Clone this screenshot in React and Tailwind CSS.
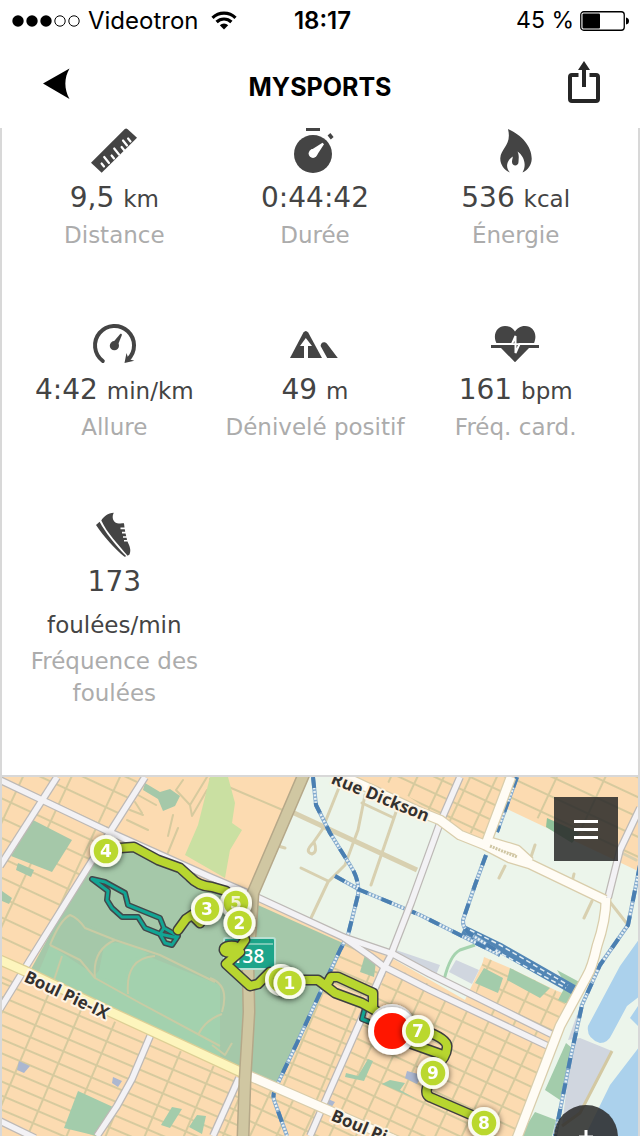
import React from "react";

const ICON = "block h-[46px] w-12 overflow-visible";

function RulerIcon() {
  const ticks = [
    [14, 38.5, 3],
    [19, 35, 6],
    [24, 30.5, 3],
    [29, 26.5, 6],
    [34, 22, 3],
    [37, 17.5, 5],
    [40.5, 13.5, 3],
  ];
  return (
    <svg viewBox="0 0 48 46" className={ICON} aria-hidden="true">
      <path d="M1 34.7 34.8 1Q36.2 0 37.4 1L47 9.7 11.7 44.8Z" fill="#444" />
      <g stroke="#fff" strokeWidth="2.2" strokeLinecap="round">
        {ticks.map(([x, y, n]) => (
          <line key={x} x1={x} y1={y} x2={x - n * 0.8} y2={y - n} />
        ))}
      </g>
    </svg>
  );
}

function StopwatchIcon() {
  return (
    <svg viewBox="0 0 48 46" className={ICON} aria-hidden="true">
      <rect x="15" y="0" width="14" height="3" fill="#444" />
      <circle cx="22" cy="26" r="19" fill="#444" />
      <path d="M36.6 7.6 39.4 5 42.6 9 39.8 11.6Z" fill="#444" />
      <path d="M20 22 31.5 14.8 33 16.3 26 27Z" fill="#fff" />
      <circle cx="22" cy="25.5" r="4.4" fill="#fff" />
    </svg>
  );
}

function FlameIcon() {
  return (
    <svg viewBox="0 0 48 46" className={ICON} aria-hidden="true">
      <path
        fill="#444"
        d="M16 1C30 7 40 19 39.7 31C39.5 37 36 42 30.500 44.5C35 37 32 28 25.5 23.500C27.5 28 26.5 31 26.5 34C26.5 38.5 20 38.5 20 34C20 32 20.5 31 20.8 28.5C14 33 13.5 40 18 44.5C12 42 8 36 8.3 30C9 20 20 17 16 1Z"
      />
    </svg>
  );
}

function GaugeIcon() {
  return (
    <svg viewBox="0 0 48 46" className={ICON} aria-hidden="true">
      <path d="M12.8 41A19.5 19.5 0 1 1 38 39.5" fill="none" stroke="#444" strokeWidth="4" strokeLinecap="round" />
      <path d="M36.5 33 38.5 39 44.3 40.7 34.5 43Z" fill="#444" />
      <circle cx="24.4" cy="25.7" r="4.6" fill="#444" />
      <path d="M22.5 23 30.4 13.8Q32 13.4 31.9 15L27.5 26Z" fill="#444" />
    </svg>
  );
}

function MountainIcon() {
  return (
    <svg viewBox="0 0 48 46" className={ICON} aria-hidden="true">
      <path d="M-1 38 12.4 12.6Q14.8 9.4 17.2 12.6L31 38Z" fill="#444" />
      <path d="M14.8 18 21 26H17V38H13V26H9Z" fill="#fff" />
      <path d="M29.6 26Q30 21.6 33.8 22.2 35.4 22.4 36.6 24.4L46.8 38H36.2Z" fill="#444" />
    </svg>
  );
}

function HeartIcon() {
  return (
    <svg viewBox="0 0 48 46" className={ICON} aria-hidden="true">
      <path
        fill="#444"
        d="M4.5 23.2C0 14 5.500 6 13 6C18 6 21 8.500 23 11.500C25 8.500 28 6 33 6C41 6 46 14 42 23.200ZM9 28H37L23 42.200Z"
      />
      <rect x="-1" y="25" width="48" height="3" fill="#444" />
      <path d="M2.500 24H20L23.500 16V33L27.500 24H44" fill="none" stroke="#fff" strokeWidth="2" />
    </svg>
  );
}

function ShoeIcon() {
  return (
    <svg viewBox="0 0 48 46" className={ICON} aria-hidden="true">
      <path
        fill="#444"
        d="M11.300 8.500C13.500 4.500 18 1.300 23.800 0.800C22.500 3 22 7 24.500 9.700C27 12 31 11.400 34 11.300L34.500 15.600H30.500V17.200H34.800L35.200 19.800H32V21.400H35.600L36.200 24.200H33V25.800H36.600L37 28H34V29.600H37.500C39.500 34 41.500 38 39.500 42.500L37.600 43.800C28 32 17 21 11.300 8.500Z"
      />
      <path d="M6 13 9.600 9.800C15 20 25 33 36.300 44.300L34.500 44.800C25 37 14 25 6 13Z" fill="#444" />
    </svg>
  );
}

const STATS = [
  { Icon: RulerIcon, value: "9,5", unit: "km", label: "Distance" },
  { Icon: StopwatchIcon, value: "0:44:42", unit: "", label: "Durée" },
  { Icon: FlameIcon, value: "536", unit: "kcal", label: "Énergie" },
  { Icon: GaugeIcon, value: "4:42", unit: "min/km", label: "Allure" },
  { Icon: MountainIcon, value: "49", unit: "m", label: "Dénivelé positif" },
  { Icon: HeartIcon, value: "161", unit: "bpm", label: "Fréq. card." },
  { Icon: ShoeIcon, value: "173", unit: "foulées/min", label: "Fréquence des foulées" },
];

function Stat({ Icon, value, unit, label }) {
  return (
    <li className="flex flex-col items-center px-2 text-center">
      <Icon />
      <p className="mt-[3px] text-[28px] leading-[42px] text-[#444]">
        {value} {unit && <span className="text-[23px] leading-none">{unit}</span>}
      </p>
      <p className="text-[23px] leading-8 text-[#acacac]">{label}</p>
    </li>
  );
}

function StatusBar() {
  return (
    <div className="grid h-[41px] grid-cols-3 items-center pl-3 pr-[11px] text-2xl text-black">
      <div className="flex items-center gap-2">
        <svg viewBox="0 0 68 12" className="h-3 w-[68px] shrink-0" aria-hidden="true">
          {[6, 20, 34].map((x) => (
            <circle key={x} cx={x} cy="6" r="5.7" />
          ))}
          {[48, 62].map((x) => (
            <circle key={x} cx={x} cy="6" r="5.200" fill="none" stroke="#000" />
          ))}
        </svg>
        <span>Videotron</span>
        <svg viewBox="0 0 26 19" className="ml-1 h-[19px] w-[26px] shrink-0" aria-hidden="true">
          <g fill="none" stroke="#000" strokeWidth="3.200">
            <path d="M1.500 6.800A16.500 16.500 0 0 1 24.500 6.800" />
            <path d="M5.600 11A10.600 10.600 0 0 1 20.400 11" />
          </g>
          <path d="M8.800 14.200A6 6 0 0 1 17.200 14.200L13 18.500Z" />
        </svg>
      </div>
      <span className="pl-1 text-center font-semibold">18:17</span>
      <div className="flex items-center justify-end gap-[6px]">
        <span className="whitespace-nowrap text-[23px]">45 %</span>
        <svg viewBox="0 0 49 20" className="h-5 w-[49px] shrink-0" aria-hidden="true">
          <rect x="0.750" y="0.750" width="43.500" height="18.500" rx="3" fill="none" stroke="#000" strokeWidth="1.300" />
          <rect x="2.500" y="2.500" width="17.500" height="15" rx="1" />
          <path d="M46 6.500Q49 7 49 10T46 13.500Z" />
        </svg>
      </div>
    </div>
  );
}

function NavBar() {
  return (
    <div className="flex h-[87px] items-center justify-between px-10 pt-[6px]">
      <button type="button" aria-label="Retour" className="-mt-2 flex h-12 w-8 items-center">
        <svg viewBox="0 0 32 32" className="h-8 w-8">
          <path d="M3 15.500 29.500 0.500C24 10 24 21 29.500 31Z" />
        </svg>
      </button>
      <h1 className="text-[25px] font-bold text-black">MYSPORTS</h1>
      <button type="button" aria-label="Partager" className="-mt-3 flex h-12 w-8 items-center">
        <svg viewBox="0 0 32 42" className="h-[42px] w-8">
          <path d="M10.500 14H4Q2 14 2 16V38Q2 40 4 40H28Q30 40 30 38V16Q30 14 28 14H21.500" fill="none" stroke="#262626" strokeWidth="4" />
          <path d="M16 0 22 9H18V26H14V9H10Z" fill="#262626" />
        </svg>
      </button>
    </div>
  );
}

const GREY_ROADS = [
  "M0 780 42 800 105 830 210 877 250 894 343 937 370 956 383 966 430 990 552 1048",
  "M343 937 393 954 430 974 557 1037",
  "M57 777 0 866",
  "M145 777 110 832 30 960 0 1009",
  "M151 1034 132 1079 117 1106 97 1136",
  "M0 1121 35 1138",
  "M460 777 440 823 411 903 390 957 383 970 323 1106 310 1136",
  "M640 808 620 850 608 898",
  "M239 1078 213 1136",
];

const CREAM_ROADS = [
  "M330 770 420 812 440 820 460 835 485 845 510 858 530 864 605 900",
  "M511 777 487 841 517 850 530 862",
  "M606 898Q606 920 597 946 592 968 587 976L560 1026 517 1138",
  "M245 1074 330 1111 400 1142",
];

const RAILS = [
  "M313 777 316 805 330 833 350 865Q360 880 358 895L348 935 340 950 320 993 297 1043 278 1083Q272 1092 274 1100L287 1136",
  "M335 876 360 890 420 915 460 935 500 955",
  "M486 855 475 885 463 920Q462 930 475 937L500 953",
  "M640 865 628 925 600 965 582 1005 570 1060 555 1136",
  "M517 777 497 832",
];

const TAN_STREETS = [
  "M340 785 322 830 313 843Q304 852 312 854 318 852 314 842",
  "M365 795 358 830 345 865 328 882 311 918",
  "M362 803 394 818M396 812 371 885M301 868 328 881M278 846 285 848",
  "M535 845 530 860M505 866 499 878M592 901 584 918M574 874 572 882",
  "M628 925 606 897M636 860 622 853",
];

const PARK_PATHS = [
  "M50 945Q60 920 70 915 78 918 85 928L115 940 160 955 215 982",
  "M50 945 80 960 95 978 140 1003 220 1046",
  "M62 956 54 980M95 978Q92 950 115 940M128 994Q125 958 155 956M198 1035Q205 1020 222 1014",
  "M210 978Q230 985 222 1012M212 1045 225 1055 232 1043",
];

const ROUTE = [
  "M106 850 120 848 134 847 158 860 180 868 190 877Q198 886 212 887L226 891 238 905 240 925 245 940 238 950Q226 955 224 950 224 945 235 946L240 952 226 964 250 986 258 984 270 972 290 980 318 980 326 986 335 993 362 1003 385 1016 418 1032",
  "M326 986 331 977H338L373 993V1008",
  "M207 909 200 923 192 915 186 919 178 930",
  "M428 1032Q449 1040 447 1048 446 1058 436 1066L433 1075 427 1088Q425 1096 432 1098L483 1120",
  "M412 1044 443 1055",
];

const TEAL_ROUTE = [
  "M92 879 105 882 125 893 128 905 160 918 164 928 178 936 172 945 165 943 160 934 145 928 138 917H122L112 908 107 900 108 891Z",
  "M164 928 160 934 178 938",
  "M365 1008 362 1019 372 1023",
];

const MARKERS = [
  { n: "4", x: 106, y: 851 },
  { n: "5", x: 236, y: 903, behind: true },
  { n: "3", x: 207, y: 909 },
  { n: "2", x: 239.500, y: 923 },
  { n: "", x: 281, y: 980 },
  { n: "1", x: 289.500, y: 983 },
];

const LATE_MARKERS = [
  { n: "7", x: 418, y: 1031 },
  { n: "9", x: 433, y: 1073 },
  { n: "8", x: 484, y: 1123 },
];

function Strokes({ paths, color, width, ...rest }) {
  return (
    <g fill="none" stroke={color} strokeWidth={width} strokeLinejoin="round" {...rest}>
      {paths.map((d) => (
        <path key={d} d={d} />
      ))}
    </g>
  );
}

function Marker({ n, x, y, behind }) {
  return (
    <g filter="url(#shadow)">
      <circle cx={x} cy={y} r="16" fill="#fafbef" />
      <circle cx={x} cy={y} r="12.300" fill="#bad82e" />
      <text
        x={x}
        y={y + 6}
        textAnchor="middle"
        fontSize="17"
        fill={behind ? "#f2f4d6" : "#fff"}
        className="font-['DejaVu_Sans',sans-serif] font-bold"
      >
        {n}
      </text>
    </g>
  );
}

function RouteMap() {
  return (
    <svg
      viewBox="2 777 636 359"
      preserveAspectRatio="xMinYMin slice"
      className="absolute inset-0 h-full w-full"
      role="img"
      aria-label="Carte du parcours"
    >
      <defs>
        <pattern id="streetsWide" width="44" height="18" patternUnits="userSpaceOnUse" patternTransform="translate(18 785) rotate(25)">
          <path d="M0 1H44M1 0V18" stroke="#d6ca9e" strokeWidth="2" />
        </pattern>
        <pattern id="streets" width="36" height="13" patternUnits="userSpaceOnUse" patternTransform="translate(45 1000) rotate(23)">
          <path d="M0 1H36M1 0V13" stroke="#d6ca9e" strokeWidth="2" />
        </pattern>
        <pattern id="streetsEast" width="24" height="15" patternUnits="userSpaceOnUse" patternTransform="translate(440 1010) rotate(25)">
          <path d="M0 1H24M1 0V15" stroke="#d6ca9e" strokeWidth="2" />
        </pattern>
        <filter id="shadow" x="-40%" y="-40%" width="180%" height="180%">
          <feDropShadow dx="0" dy="1" stdDeviation="3" floodColor="#000" floodOpacity="0.650" />
        </filter>
      </defs>

      <rect x="0" y="770" width="640" height="370" fill="#fcdbb1" />
      <path d="M0 777H140L105 835 50 930 0 1005Z" fill="url(#streetsWide)" />
      <path d="M0 970 245 1080V1136H0Z" fill="url(#streets)" />
      <path d="M343 940 390 965 325 1110 245 1075 280 1080Z" fill="url(#streets)" />
      <path d="M390 965 552 1045 515 1136H245V1080L325 1110Z" fill="url(#streetsEast)" />
      <path d="M380 777H508L485 840 440 818Z" fill="url(#streetsEast)" />
      <path d="M517 777H640V860L505 805Z" fill="url(#streetsWide)" />

      <Strokes
        color="#d6ca9e"
        width="2"
        strokeLinecap="round"
        paths={[
          "M138 795 156 805M135 802 142 813M130 810 143 815M127 820 148 830M173 815 168 836M178 828 167 855M183 780 176 790 190 805 207 777M190 805 192 816 207 790M210 779 285 811",
        ]}
      />

      <path d="M33 820 72 840 52 872 11 856Z" fill="#a5c8a9" />
      <path d="M18 863 34 870 31 877 16 870ZM2 891 12 898 9 904 2 901Z" fill="#a5c8a9" />
      <path d="M145 783 160 792 170 789 180 796 175 806 163 811 158 799 143 790Z" fill="#a5c8a9" />
      <path d="M210 777H228L235 803 232 823 242 830 230 850 225 878 185 855 198 825Z" fill="#cae0a2" />
      <path d="M104 836 345 944 279 1085 30 971Z" fill="#a5c8a9" />
      <path d="M50 945 95 955 120 945 220 985V1062L140 1028 36 978Z" fill="#a3d1ae" />
      <path d="M50 945 68 916 125 942 95 975Z" fill="#a5c8a9" />
      <path d="M104 946Q116 936 150 954L128 960 124 985 98 976Z" fill="#a3d1ae" />

      <path d="M304 777H345L420 812 485 845 505 808 640 872V1136H515L570 1010 540 990 484 960 465 1000 395 960 252 896Z" fill="#ecf5eb" />
      <path d="M484 957 510 968 555 990 580 1000 550 1048 472 1010Z" fill="#fcdbb1" />
      <path d="M484 957 510 968 555 990 570 1010 550 1048 472 1010Z" fill="url(#streetsEast)" />
      <path d="M510 968 550 988 540 998 507 980ZM484 968 503 978 498 993 475 983Z" fill="#a3ccab" />
      <path d="M557 970 585 985 570 1005 558 1000 566 985Z" fill="#a3ccab" />
      <path d="M456 960 479 970 472 984 449 972Z" fill="#d0d6df" />
      <path d="M444 980Q450 955 460 950L475 945" fill="none" stroke="#a5d3ae" strokeWidth="3" />
      <path d="M396 950 440 965 436 975 396 960Z" fill="#d0d6df" />
      <path d="M365 955 376 962 374 977 360 972Z" fill="#a5c8a9" />
      <path d="M547 818 580 833 572 843 546 827Z" fill="#8fc29a" />

      <path d="M640 938 620 966 588 1026Q586 1038 600 1043 608 1043 612 1034L627 1006 640 996Z" fill="#abd1ec" />
      <path d="M640 1003 630 1018 640 1028ZM640 1046 610 1085 585 1136H640Z" fill="#abd1ec" />
      <path d="M578 1012 568 1040 580 1038 612 1051 580 1113 562 1126 570 1060Z" fill="#d0d6df" />
      <path d="M566 1043 572 1048 560 1100 545 1090Z" fill="#a3ccab" />
      <path d="M535 1112 556 1120 552 1136H520Z" fill="#a3ccab" />
      <path d="M612 1051 580 1113 562 1126" fill="none" stroke="#d3c8a2" strokeWidth="3" />

      <path d="M78 1091 113 1107 97 1136 64 1128Z" fill="#a3ccab" />
      <path d="M172 1107 182 1109 170 1128 161 1125ZM197 1115 206 1116 202 1134 189 1127Z" fill="#a3ccab" />
      <path d="M368 1059 373 1061 364 1081 345 1077 346 1073 358 1076ZM390 1080 405 1083 400 1090 416 1099 382 1084Z" fill="#a3ccab" />
      <path d="M19 1061 30 1066 24 1073 17 1070ZM113 1077 122 1081 118 1087 112 1083ZM407 1071 422 1075 417 1084 405 1078ZM328 1099 335 1102 331 1108 325 1104Z" fill="#abb7d0" />

      <Strokes paths={PARK_PATHS} color="#c9cba4" width="2" />
      <Strokes paths={TAN_STREETS} color="#d8d0b0" width="3" strokeLinecap="round" />
      <path d="M292 812 417 870" stroke="#d8d0b0" strokeWidth="5" />

      <path d="M463 930 500 948 574 990" fill="none" stroke="#5286b5" strokeWidth="10" />
      <path d="M470 930 500 945 568 985M466 936 498 952 566 988" fill="none" stroke="#e1ecf2" strokeWidth="1.500" strokeDasharray="5 3" />
      <Strokes paths={RAILS} color="#83aace" width="4" />
      <Strokes paths={RAILS} color="#eaf2f4" width="2.500" strokeDasharray="2 1.500" />
      <Strokes paths={RAILS} color="#4a7fb1" width="4" strokeDasharray="11 15" />

      <Strokes paths={GREY_ROADS} color="#bdb9b6" width="8" />
      <Strokes paths={GREY_ROADS} color="#f3f2f5" width="5.500" />
      <Strokes paths={CREAM_ROADS} color="#d9cdab" width="11" />
      <Strokes paths={CREAM_ROADS} color="#fffcf5" width="8.500" />
      <path d="M490 846 517 857" stroke="#cfc6a3" strokeWidth="3" strokeDasharray="2 1" />
      <path d="M0 960 25 971 100 1007 245 1074" fill="none" stroke="#ddcf95" strokeWidth="11" />
      <path d="M0 960 25 971 100 1007 245 1074" fill="none" stroke="#fdf5bd" strokeWidth="8.500" />
      <path d="M304 774 253 893 248 966 249 1012 245 1080 243 1138" fill="none" stroke="#b5a889" strokeWidth="13" />
      <path d="M304 774 253 893 248 966 249 1012 245 1080 243 1138" fill="none" stroke="#d0c7a2" strokeWidth="10" />

      <g
        fill="#34312f"
        stroke="#fdf4e4"
        strokeWidth="4"
        paintOrder="stroke"
        strokeLinejoin="round"
        fontSize="17"
        className="font-['Open_Sans',sans-serif] font-bold"
      >
        <text transform="translate(330 783) rotate(22)">Rue Dickson</text>
        <text transform="translate(23 981) rotate(25)">Boul Pie-IX</text>
        <text transform="translate(330 1120) rotate(23)">Boul Pie-IX</text>
      </g>

      <rect x="224" y="938" width="51" height="31" rx="2" fill="#1da58a" stroke="#b8e0d2" strokeWidth="2" />
      <path d="M226 944H273" stroke="#d0ebe0" />
      <text x="248" y="963" textAnchor="middle" fontSize="19" fill="#fff" className="font-['Open_Sans',sans-serif] font-semibold">
        138
      </text>

      <Strokes paths={TEAL_ROUTE} color="#43474a" width="6" />
      <Strokes paths={TEAL_ROUTE} color="#12a594" width="3" />
      <Strokes paths={ROUTE} color="#3f4040" width="11" strokeLinecap="round" />
      <Strokes paths={ROUTE} color="#b8d62f" width="8" strokeLinecap="round" />

      {MARKERS.map((m) => (
        <Marker key={m.x} {...m} />
      ))}
      <g filter="url(#shadow)">
        <circle cx="392" cy="1027" r="23" fill="#f2f2f2" />
      </g>
      <g filter="url(#shadow)">
        <circle cx="392" cy="1031" r="24" fill="#fff" />
        <circle cx="392" cy="1031" r="18" fill="#ff1600" />
      </g>
      {LATE_MARKERS.map((m) => (
        <Marker key={m.x} {...m} />
      ))}
    </svg>
  );
}

export default function App() {
  return (
    <div className="flex h-screen flex-col overflow-hidden bg-white font-['Inter',sans-serif]">
      <header className="shrink-0 bg-white">
        <StatusBar />
        <NavBar />
      </header>
      <main className="flex flex-1 flex-col border-x-2 border-[#d8d8d8]">
        <ul className="grid grid-cols-3 gap-y-[69px] pb-[66px] pl-3 pr-[22px] font-['DejaVu_Sans',sans-serif]">
          {STATS.map((s) => (
            <Stat key={s.label} {...s} />
          ))}
        </ul>
        <section className="relative min-h-[360px] flex-1 overflow-hidden border-t-2 border-[#d8d8d8]">
          <RouteMap />
          <button
            type="button"
            aria-label="Menu de la carte"
            className="absolute right-5 top-5 flex h-16 w-16 flex-col items-center justify-center gap-[5px] bg-[#282828]/85"
          >
            <span className="h-[3px] w-6 bg-white" />
            <span className="h-[3px] w-6 bg-white" />
            <span className="h-[3px] w-6 bg-white" />
          </button>
          <button
            type="button"
            aria-label="Zoom avant"
            className="absolute right-5 top-[328px] flex h-16 w-16 items-center justify-center rounded-full bg-[#282828]/85"
          >
            <svg viewBox="0 0 24 24" className="h-6 w-6" aria-hidden="true">
              <path d="M12 5V19M5 12H19" stroke="#fff" strokeWidth="3" />
            </svg>
          </button>
        </section>
      </main>
    </div>
  );
}
